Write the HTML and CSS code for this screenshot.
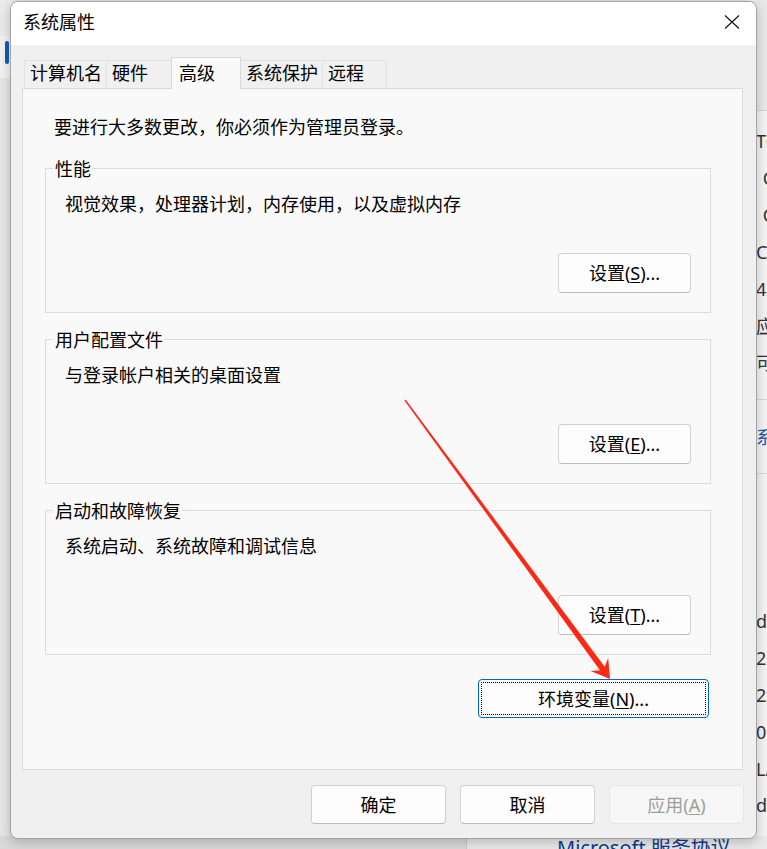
FILE: index.html
```html
<!DOCTYPE html>
<html lang="zh-CN">
<head>
<meta charset="utf-8">
<title>系统属性</title>
<link rel="stylesheet" href="styles.css">
</head>
<body>
<div class="desktop">
  <div class="bg-left">
    <div class="bg-left-top"></div>
    <div class="bg-left-item"><span class="pill"></span></div>
  </div>

  <div class="bg-right">
    <div class="bg-right-head"></div>
    <div class="bg-right-list">
      <div class="bg-row">TCP</div>
      <div class="bg-row in">&nbsp;Co</div>
      <div class="bg-row in">&nbsp;Co</div>
      <div class="bg-row">Ca</div>
      <div class="bg-row">42</div>
      <div class="bg-row ul">应用</div>
      <div class="bg-row">可</div>
      <div class="bg-row sep"></div>
      <div class="bg-row link">系统</div>
      <div class="bg-row sep"></div>
      <div class="bg-row"></div>
      <div class="bg-row"></div>
      <div class="bg-row"></div>
      <div class="bg-row">d</div>
      <div class="bg-row">2</div>
      <div class="bg-row">2/</div>
      <div class="bg-row">00</div>
      <div class="bg-row">L/</div>
      <div class="bg-row">d</div>
    </div>
  </div>

  <div class="bg-bottom">
    <div class="bg-bottom-left"></div>
    <div class="bg-bottom-right"><span class="ms-link">Microsoft 服务协议</span></div>
  </div>

  <div class="dialog">
    <div class="titlebar">
      <span class="title">系统属性</span>
      <svg class="close" width="16" height="16" viewBox="0 0 16 16" aria-hidden="true">
        <path d="M1 1.5 L15 14.5 M15 1.5 L1 14.5" stroke="#1b1b1b" stroke-width="1.25" fill="none"/>
      </svg>
    </div>

    <div class="body">
      <div class="tabs">
        <div class="tab t1">计算机名</div>
        <div class="tab t2">硬件</div>
        <div class="tab t3 selected">高级</div>
        <div class="tab t4">系统保护</div>
        <div class="tab t5">远程</div>
      </div>

      <div class="panel">
        <p class="note">要进行大多数更改，你必须作为管理员登录。</p>

        <div class="group first">
          <span class="group-label">性能</span>
          <p class="group-desc">视觉效果，处理器计划，内存使用，以及虚拟内存</p>
          <button class="btn settings" type="button">设置(<u>S</u>)...</button>
        </div>

        <div class="group">
          <span class="group-label">用户配置文件</span>
          <p class="group-desc">与登录帐户相关的桌面设置</p>
          <button class="btn settings" type="button">设置(<u>E</u>)...</button>
        </div>

        <div class="group">
          <span class="group-label">启动和故障恢复</span>
          <p class="group-desc">系统启动、系统故障和调试信息</p>
          <button class="btn settings" type="button">设置(<u>T</u>)...</button>
        </div>

        <button class="btn env focused" type="button">环境变量(<u>N</u>)...</button>
      </div>

      <div class="actions">
        <button class="btn action" type="button">确定</button>
        <button class="btn action" type="button">取消</button>
        <button class="btn action disabled" type="button">应用(<u>A</u>)</button>
      </div>
    </div>
  </div>

  <svg class="arrow" width="767" height="849" viewBox="0 0 767 849" aria-hidden="true">
    <polygon points="404.44,400.41 599.88,670.30 590.49,671.0 610,679 608.2,657.98 604.72,666.74 405.56,399.59" fill="#fd2917"/>
  </svg>
</div>
</body>
</html>
```

FILE: styles.css
```css
* { box-sizing: border-box; }

html, body {
  margin: 0;
  padding: 0;
}

body {
  width: 767px;
  height: 849px;
  overflow: hidden;
  background: #e4e4e4;
  font-family: "Noto Sans", "Noto Sans CJK SC", sans-serif;
  font-size: 18px;
  color: #000;
}

.desktop {
  position: relative;
  width: 767px;
  height: 849px;
  overflow: hidden;
}

/* ---------- background (windows behind the dialog) ---------- */
.bg-left {
  position: absolute;
  left: 0;
  top: 0;
  width: 12px;
  height: 849px;
  background: #e6e6e6;
  display: flex;
  flex-direction: column;
}
.bg-left-top {
  height: 36px;
  background: #ebebeb;
}
.bg-left-item {
  height: 42px;
  background: #f2f2f2;
  padding: 5px 0 0 5px;
}
.pill {
  display: block;
  width: 4px;
  height: 23px;
  border-radius: 2px;
  background: #0f5cbf;
}

.bg-right {
  position: absolute;
  left: 745px;
  top: 0;
  width: 40px;
  height: 849px;
  background: #f4f4f4;
  display: flex;
  flex-direction: column;
}
.bg-right-head {
  height: 111px;
  flex: none;
  background: #e9e9e9;
  border-bottom: 1px solid #d6d6d6;
}
.bg-right-list {
  padding: 12px 0 0 11px;
  display: grid;
  grid-auto-rows: 36.9px;
  align-items: center;
  font-size: 18px;
  color: #333;
  line-height: 24px;
}
.bg-row { white-space: nowrap; }
.bg-row.in { padding-left: 2px; }
.bg-row.ul { text-decoration: underline; text-decoration-color: #9a9a9a; }
.bg-row.link { color: #1a55a6; }
.bg-row.sep {
  align-self: stretch;
  background: linear-gradient(#d9d9d9, #d9d9d9) center / 100% 1px no-repeat;
}

.bg-bottom {
  position: absolute;
  left: 0;
  top: 836px;
  width: 767px;
  height: 13px;
  display: flex;
}
.bg-bottom-left {
  width: 467px;
  background: #d9d9d9;
  border-right: 1px solid #c8c8c8;
}
.bg-bottom-right {
  flex: 1;
  background: #e9e9e9;
  padding-left: 90px;
  overflow: hidden;
}
.ms-link {
  display: block;
  font-size: 20px;
  line-height: 20px;
  margin-top: 2px;
  color: #0d3b8c;
  white-space: nowrap;
}

/* ---------- dialog ---------- */
.dialog {
  position: absolute;
  left: 10px;
  top: 1px;
  width: 747px;
  height: 838px;
  border: 1px solid #a4a4a4;
  border-radius: 8px;
  background: #f0f0f0;
  overflow: hidden;
  display: flex;
  flex-direction: column;
  box-shadow: 0 3px 12px rgba(0, 0, 0, 0.22);
  z-index: 2;
}

.titlebar {
  height: 43px;
  flex: none;
  background: #fff;
  display: flex;
  align-items: center;
  justify-content: space-between;
  padding: 0 16px 3px 12px;
}
.title {
  line-height: 24px;
}
.close { display: block; }

.body {
  flex: 1;
  display: flex;
  flex-direction: column;
  padding: 12px 13px 0 11px;
}

/* tabs */
.tabs {
  height: 31px;
  display: flex;
  align-items: flex-end;
  padding-left: 2px;
  position: relative;
  z-index: 1;
}
.tab {
  height: 28px;
  line-height: 25px;
  padding-left: 5px;
  background: #f0f0f0;
  border-top: 1px solid #e2e2e2;
  border-right: 1px solid #e2e2e2;
  white-space: nowrap;
}
.tab.t1 { width: 83px; border-left: 1px solid #e2e2e2; }
.tab.t2 { width: 65px; }
.tab.t3 { width: 69px; }
.tab.t4 { width: 82px; }
.tab.t5 { width: 64px; }
.tab.selected {
  height: 32px;
  margin-bottom: -1px;
  line-height: 30px;
  padding-left: 7px;
  background: #f9f9f9;
  border-top: 1px solid #d9d9d9;
  border-right: 1px solid #d9d9d9;
  border-left: 1px solid #d9d9d9;
  margin-left: -1px;
  width: 70px;
}

.panel {
  height: 682px;
  flex: none;
  background: #f9f9f9;
  border: 1px solid #dadada;
  padding: 26px 31px 0 22px;
  display: flex;
  flex-direction: column;
}

.note {
  margin: 0 0 0 9px;
  line-height: 24px;
}

.group {
  height: 145px;
  margin-top: 26px;
  border: 1px solid #dcdcdc;
  padding: 0 19px 19px 19px;
  display: flex;
  flex-direction: column;
}
.group.first { margin-top: 29px; }

.group-label {
  align-self: flex-start;
  margin: -12px 0 0 -12px;
  padding: 0 1px 0 2px;
  line-height: 24px;
  background: #f9f9f9;
}
.group-desc {
  margin: 11px 0 0 0;
  line-height: 24px;
}

/* buttons */
.btn {
  font: inherit;
  color: #000;
  line-height: 24px;
  padding: 0;
  background: #fdfdfd;
  border: 1px solid #d1d1d1;
  border-bottom-color: #bcbcbc;
  border-radius: 4px;
  display: flex;
  align-items: center;
  justify-content: center;
  white-space: nowrap;
}
.btn u { text-underline-offset: 2px; }

.btn.settings {
  margin-top: auto;
  align-self: flex-end;
  width: 133px;
  height: 40px;
}

.btn.env {
  margin-top: 24px;
  margin-right: 2px;
  align-self: flex-end;
  width: 231px;
  height: 39px;
}
.btn.focused {
  border: 1px solid #0067c0;
  outline: 1px dotted #000;
  outline-offset: -4px;
}

.actions {
  margin-top: 15px;
  margin-right: -1px;
  display: flex;
  justify-content: flex-end;
  gap: 14px;
}
.btn.action {
  width: 135px;
  height: 39px;
}
.btn.disabled {
  color: #9d9d9d;
  background: #f6f6f6;
  border-color: #e6e6e6;
}

/* annotation arrow */
.arrow {
  position: absolute;
  left: 0;
  top: 0;
  z-index: 5;
  pointer-events: none;
}
```
